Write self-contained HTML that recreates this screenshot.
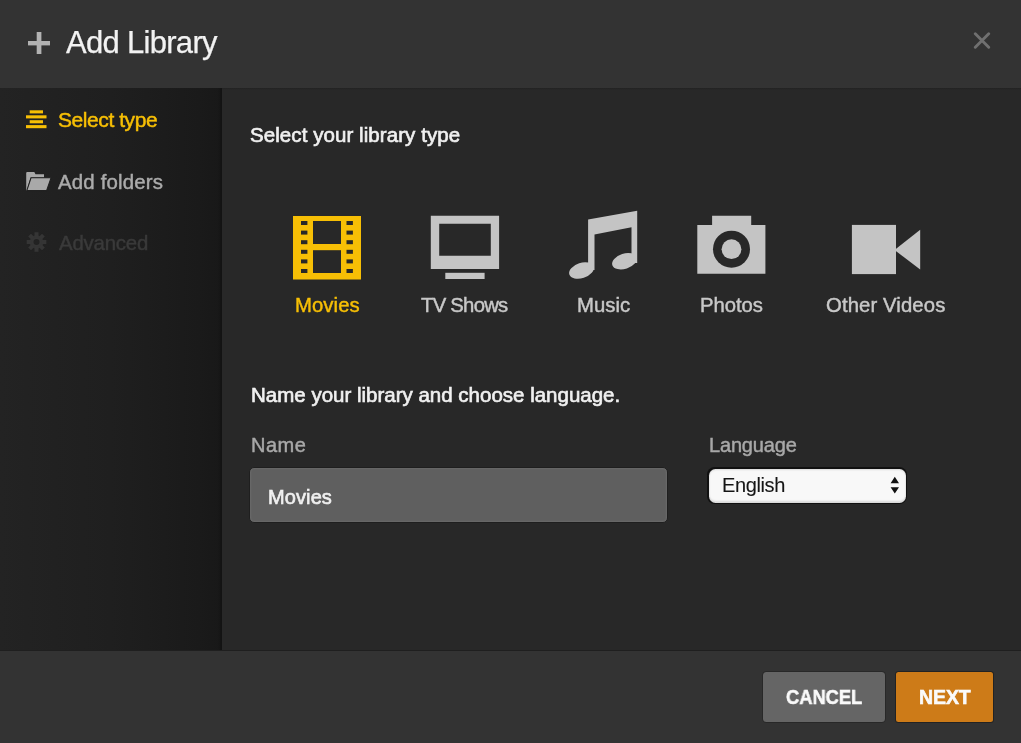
<!DOCTYPE html>
<html><head><meta charset="utf-8">
<style>
html,body{margin:0;padding:0;width:1021px;height:743px;overflow:hidden;background:#282828;font-family:"Liberation Sans",sans-serif;}
.a{position:absolute;white-space:nowrap;line-height:1;will-change:transform;}
#hdr{position:absolute;left:0;top:0;width:1021px;height:88px;background:#333333;}
#side{position:absolute;left:0;top:88px;width:222px;height:562px;background:linear-gradient(to right,#232323,#1f1f1f 50%,#1a1a1a 90%,#181818);}
#sideedge{position:absolute;left:218px;top:88px;width:4px;height:562px;background:linear-gradient(to right,rgba(0,0,0,0),rgba(0,0,0,0.25));}
#main{position:absolute;left:222px;top:88px;width:799px;height:562px;background:#282828;}
#mainline{position:absolute;left:222px;top:88px;width:799px;height:2px;background:linear-gradient(#222,#282828);}
#ftr{position:absolute;left:0;top:650px;width:1021px;height:93px;background:#333333;border-top:1px solid #1f1f1f;box-sizing:border-box;}
.yel{color:#f7bf05;}
.btn{position:absolute;border-radius:4px;}
</style></head><body>
<div id="hdr"></div>
<div id="side"></div>
<div id="sideedge"></div>
<div id="main"></div>
<div id="mainline"></div>
<div id="ftr"></div>

<!-- header -->
<svg class="a" style="left:28px;top:32px" width="22" height="22" viewBox="0 0 22 22">
  <rect x="8.7" y="0" width="4.7" height="22" fill="#b2b2b2"/>
  <rect x="0" y="9" width="22" height="4.4" fill="#b2b2b2"/>
</svg>
<div class="a" id="t_title" style="left:65.5px;top:27px;font-size:31px;color:#f2f2f2;letter-spacing:-0.7px;-webkit-text-stroke:0.25px #f2f2f2">Add Library</div>
<svg class="a" style="left:973px;top:32px" width="18" height="17" viewBox="0 0 18 17">
  <path d="M2.3 1.8 L15.7 15.2 M15.7 1.8 L2.3 15.2" stroke="#707070" stroke-width="2.9" stroke-linecap="round"/>
</svg>

<!-- sidebar -->
<svg class="a" style="left:26px;top:110px" width="21" height="19" viewBox="0 0 21 19">
  <rect x="3.7" y="0.3" width="13.3" height="3.1" fill="#f7bf05"/>
  <rect x="0" y="5.3" width="20.5" height="3.1" fill="#f7bf05"/>
  <rect x="3.7" y="10.2" width="13.3" height="3.1" fill="#f7bf05"/>
  <rect x="0" y="15.1" width="20.5" height="3.1" fill="#f7bf05"/>
</svg>
<div class="a yel" id="t_sel" style="left:57.5px;top:109.2px;font-size:21px;letter-spacing:-0.43px;-webkit-text-stroke:0.5px #f7bf05">Select type</div>

<svg class="a" style="left:26px;top:172px" width="26" height="20" viewBox="0 0 26 20">
  <path d="M0.2 1 Q0.2 0 1.2 0 L8.3 0 L9.5 2.3 L18 2.3 L18 5.5 L4.6 5.5 L0.8 18.6 L0.2 18.6 Z" fill="#a9a9a9"/>
  <path d="M5.1 5.7 L25.1 5.7 L20.6 18.6 L0.8 18.6 Z" fill="#a9a9a9" stroke="#212121" stroke-width="1.1" stroke-linejoin="round"/>
</svg>
<div class="a" id="t_fold" style="left:57.9px;top:172.1px;font-size:20.4px;color:#ababab;letter-spacing:0.19px;-webkit-text-stroke:0.45px #ababab">Add folders</div>

<svg class="a" style="left:26px;top:232px" width="21" height="20" viewBox="-10.5 -10 21 20">
  <g fill="#353535">
    <circle r="6.8"/>
    <rect x="-2" y="-9.8" width="4" height="5" transform="rotate(0)"/><rect x="-2" y="-9.8" width="4" height="5" transform="rotate(45)"/><rect x="-2" y="-9.8" width="4" height="5" transform="rotate(90)"/><rect x="-2" y="-9.8" width="4" height="5" transform="rotate(135)"/><rect x="-2" y="-9.8" width="4" height="5" transform="rotate(180)"/><rect x="-2" y="-9.8" width="4" height="5" transform="rotate(225)"/><rect x="-2" y="-9.8" width="4" height="5" transform="rotate(270)"/><rect x="-2" y="-9.8" width="4" height="5" transform="rotate(315)"/>
  </g>
  <circle r="3" fill="#222222"/>
</svg>
<div class="a" id="t_adv" style="left:58.9px;top:233px;font-size:20.4px;color:#3a3a3a;letter-spacing:-0.2px;-webkit-text-stroke:0.45px #3a3a3a">Advanced</div>

<!-- main -->
<div class="a" id="t_h1" style="left:249.8px;top:124.8px;font-size:20.5px;color:#f0f0f0;letter-spacing:0.07px;-webkit-text-stroke:0.65px #f0f0f0">Select your library type</div>

<!-- Movies icon -->
<svg class="a" style="left:293px;top:216px" width="68" height="64" viewBox="0 0 68 64">
  <rect x="0" y="0" width="68" height="63.5" fill="#f7bf05"/>
  <g fill="#282828">
    <rect x="20" y="5" width="28" height="23"/>
    <rect x="20" y="34.2" width="28" height="22.8"/>
    <rect x="8" y="5" width="6.4" height="4"/>
    <rect x="8" y="14.6" width="6.4" height="4"/>
    <rect x="8" y="24.2" width="6.4" height="4"/>
    <rect x="8" y="33.8" width="6.4" height="4"/>
    <rect x="8" y="43.4" width="6.4" height="4"/>
    <rect x="8" y="53" width="6.4" height="4"/>
    <rect x="53.5" y="5" width="6.4" height="4"/>
    <rect x="53.5" y="14.6" width="6.4" height="4"/>
    <rect x="53.5" y="24.2" width="6.4" height="4"/>
    <rect x="53.5" y="33.8" width="6.4" height="4"/>
    <rect x="53.5" y="43.4" width="6.4" height="4"/>
    <rect x="53.5" y="53" width="6.4" height="4"/>
  </g>
</svg>
<div class="a yel" id="t_mov" style="left:295.3px;top:294.7px;font-size:20.3px;letter-spacing:0.1px;-webkit-text-stroke:0.45px #f7bf05">Movies</div>

<!-- TV icon -->
<svg class="a" style="left:430px;top:215px" width="70" height="65" viewBox="0 0 70 65">
  <path d="M0.8 0.8 H69.1 V54 H0.8 Z M9.2 8.8 V40.8 H60.8 V8.8 Z" fill="#c4c4c4" fill-rule="evenodd"/>
  <rect x="15.3" y="57.8" width="39.3" height="6.2" fill="#c4c4c4"/>
</svg>
<div class="a" id="t_tv" style="left:421.2px;top:294.7px;font-size:20.3px;color:#c8c8c8;letter-spacing:-0.74px;-webkit-text-stroke:0.45px #c8c8c8">TV Shows</div>

<!-- Music icon -->
<svg class="a" style="left:560px;top:200px" width="90" height="90" viewBox="0 0 90 90">
  <path d="M28.1 19.4 L77.2 10.7 L77.2 63 L71.5 63 L71.5 27.3 L34.5 34.5 L34.5 70 L28.1 70 Z" fill="#c4c4c4"/>
  <ellipse cx="21.5" cy="70.5" rx="12.8" ry="7.6" transform="rotate(-18 21.5 70.5)" fill="#c4c4c4"/>
  <ellipse cx="64.5" cy="61.2" rx="12.8" ry="7.6" transform="rotate(-18 64.5 61.2)" fill="#c4c4c4"/>
</svg>
<div class="a" id="t_mus" style="left:577.2px;top:294.7px;font-size:20.3px;color:#c8c8c8;letter-spacing:0.07px;-webkit-text-stroke:0.45px #c8c8c8">Music</div>

<!-- Photos icon -->
<svg class="a" style="left:690px;top:205px" width="85" height="80" viewBox="0 0 85 80">
  <path d="M7.3 19.9 H22.1 V10.8 H61.2 V19.9 H75.4 V68.8 H7.3 Z" fill="#c4c4c4"/>
  <circle cx="41.5" cy="44.2" r="18.5" fill="#282828"/>
  <circle cx="41.5" cy="44.2" r="9.9" fill="#c4c4c4"/>
</svg>
<div class="a" id="t_pho" style="left:700.4px;top:294.7px;font-size:20.3px;color:#c8c8c8;letter-spacing:-0.06px;-webkit-text-stroke:0.45px #c8c8c8">Photos</div>

<!-- Other videos icon -->
<svg class="a" style="left:840px;top:210px" width="90" height="75" viewBox="0 0 90 75">
  <rect x="11.9" y="14.9" width="44.1" height="49.2" fill="#c4c4c4"/>
  <path d="M54.5 39.9 L80.2 19.7 L80.2 59.5 Z" fill="#c4c4c4"/>
</svg>
<div class="a" id="t_oth" style="left:826px;top:294.7px;font-size:20.3px;color:#c8c8c8;letter-spacing:0.115px;-webkit-text-stroke:0.45px #c8c8c8">Other Videos</div>

<div class="a" id="t_h2" style="left:250.5px;top:384.5px;font-size:20.5px;color:#f0f0f0;letter-spacing:0px;-webkit-text-stroke:0.65px #f0f0f0">Name your library and choose language.</div>

<div class="a" id="t_name" style="left:250.7px;top:434.9px;font-size:20px;color:#a8a8a8;letter-spacing:0.5px;-webkit-text-stroke:0.45px #a8a8a8">Name</div>
<div class="btn" style="left:249.4px;top:467.4px;width:418.4px;height:55.4px;box-sizing:border-box;border:1px solid #1f1f1f;border-radius:5px;background:#5f5f5f;box-shadow:inset 0 0 2px 1px rgba(255,255,255,0.07)"></div>
<div class="a" id="t_inp" style="left:268px;top:486.5px;font-size:20px;color:#f0f0f0;letter-spacing:0.1px;-webkit-text-stroke:0.65px #f0f0f0">Movies</div>

<div class="a" id="t_lang" style="left:708.9px;top:435.2px;font-size:20px;color:#a8a8a8;letter-spacing:-0.17px;-webkit-text-stroke:0.45px #a8a8a8">Language</div>
<div class="btn" style="left:707px;top:467px;width:200px;height:37px;background:#111;border-radius:7.5px"></div>
<div class="btn" style="left:708.5px;top:468.5px;width:197px;height:34px;background:#f8f8f8;border-radius:6.5px;box-shadow:inset 0 1px 2px rgba(0,0,0,0.12),inset 0 -2px 2px rgba(0,0,0,0.12)"></div>
<div class="a" id="t_eng" style="left:721.5px;top:475.4px;font-size:20px;color:#151515;letter-spacing:-0.37px;-webkit-text-stroke:0.1px #151515">English</div>
<svg class="a" style="left:890px;top:476px" width="10" height="18" viewBox="0 0 10 18">
  <path d="M0.6 7.2 L4.8 0.8 L9 7.2 Z M0.6 11.2 L9 11.2 L4.8 17.6 Z" fill="#111"/>
</svg>

<!-- footer buttons -->
<div class="btn" style="left:763px;top:671.8px;width:122.3px;height:50.3px;background:#656565;border-radius:3.5px;box-shadow:0 0 0 1px rgba(0,0,0,0.2)"></div>
<div class="a" id="t_can" style="left:785.6px;top:686.9px;font-size:20px;font-weight:700;color:#fafafa;letter-spacing:0px;transform:scaleX(0.915);transform-origin:0 0;-webkit-text-stroke:0.55px #fafafa">CANCEL</div>
<div class="btn" style="left:896px;top:671.6px;width:96.8px;height:50.4px;background:#cd7b18;border-radius:2.5px;box-shadow:0 0 0 1px rgba(0,0,0,0.3)"></div>
<div class="a" id="t_nxt" style="left:918.8px;top:687.9px;font-size:19.5px;font-weight:700;color:#fafafa;letter-spacing:-0.1px;-webkit-text-stroke:0.6px #fafafa">NEXT</div>
</body></html>
